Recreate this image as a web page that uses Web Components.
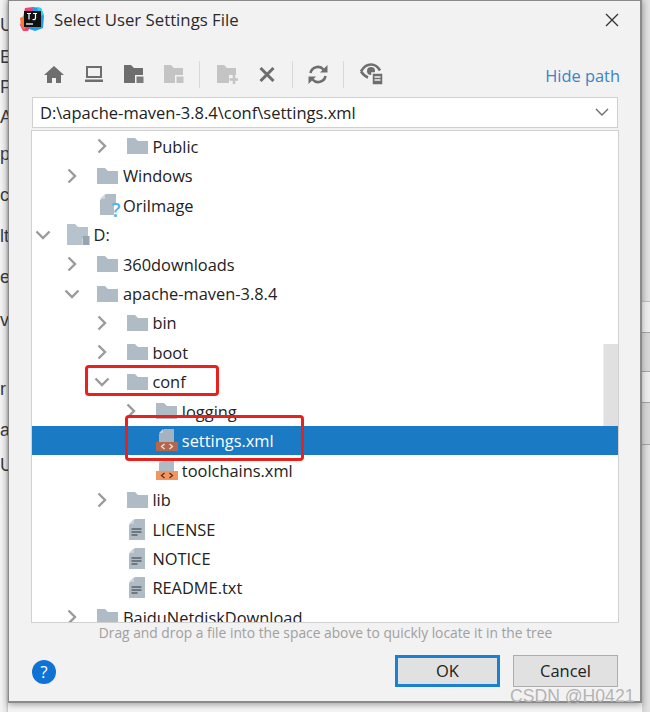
<!DOCTYPE html>
<html><head><meta charset="utf-8"><style>
html,body{margin:0;padding:0;background:#fafafa}
body{width:650px;height:712px;overflow:hidden;position:relative;font-family:"Open Sans","Noto Sans",sans-serif}
</style></head><body>
<desk-backdrop></desk-backdrop>
<file-dialog title="Select User Settings File">
  <tool-bar slot="toolbar"></tool-bar>
  <path-box slot="path" value="D:\apache-maven-3.8.4\conf\settings.xml"></path-box>
  <file-tree slot="tree">
    <tree-row level="2" chev="right" icon="folder">Public</tree-row>
    <tree-row level="1" chev="right" icon="folder">Windows</tree-row>
    <tree-row level="1" icon="unknown">OriImage</tree-row>
    <tree-row level="0" chev="down" icon="drive">D:</tree-row>
    <tree-row level="1" chev="right" icon="folder">360downloads</tree-row>
    <tree-row level="1" chev="down" icon="folder">apache-maven-3.8.4</tree-row>
    <tree-row level="2" chev="right" icon="folder">bin</tree-row>
    <tree-row level="2" chev="right" icon="folder">boot</tree-row>
    <tree-row level="2" chev="down" icon="folder">conf</tree-row>
    <tree-row level="3" chev="right" icon="folder">logging</tree-row>
    <tree-row level="3" icon="xml" selected>settings.xml</tree-row>
    <tree-row level="3" icon="xml">toolchains.xml</tree-row>
    <tree-row level="2" chev="right" icon="folder">lib</tree-row>
    <tree-row level="2" icon="text">LICENSE</tree-row>
    <tree-row level="2" icon="text">NOTICE</tree-row>
    <tree-row level="2" icon="text">README.txt</tree-row>
    <tree-row level="1" chev="right" icon="folder">BaiduNetdiskDownload</tree-row>
  </file-tree>
</file-dialog>
<red-mark style="left:85px;top:365px;width:134px;height:31px"></red-mark>
<red-mark style="left:125px;top:415px;width:179px;height:46px"></red-mark>
<water-mark>CSDN @H0421</water-mark>
<script>
const ICONS={
 folder:`<svg width="21" height="16" viewBox="0 0 21 16"><path d="M0 0h8l3 3h10v13H0z" fill="#afbcc6"/></svg>`,
 drive:`<svg width="23" height="21" viewBox="0 0 23 21"><path d="M0 0h8l3 3h10v11h-6v7H0z" fill="#b7c3cc"/><rect x="15.500" y="12" width="7" height="9" fill="#96a5b1"/></svg>`,
 text:`<svg width="16" height="21" viewBox="0 0 16 21"><path d="M6 0h10v21H0V6z" fill="#afbcc6"/><path d="M5 0v5H0z" fill="#c9d2d9"/><path d="M2.500 10h10M2.500 13h10M2.500 16h6" stroke="#59626a" stroke-width="1.300"/></svg>`,
 unknown:`<svg style="margin-left:6px;overflow:visible" width="21" height="23" viewBox="0 0 21 23"><path d="M6 0h10v9h-2v12H0V6z" fill="#afbcc6"/><path d="M5 0v5H0z" fill="#cdd5db"/><text x="11.500" y="23" font-family="Open Sans" font-weight="600" font-size="20" fill="#4db6ea">?</text></svg>`,
 xml:`<svg style="margin-left:1px" width="22" height="24" viewBox="0 0 22 24"><path d="M8 0h10v13H3V5z" fill="var(--page,#afbcc6)"/><path d="M7 0v4H3z" fill="var(--fold,#cdd5db)"/><rect y="13" width="22" height="9" fill="var(--bar,#f2955f)"/><path d="M8.500 15l-3 2.500 3 2.500M13.500 15l3 2.500-3 2.500" fill="none" stroke="var(--code,#5a3323)" stroke-width="1.300"/></svg>`,
 right:`<svg width="10" height="16" viewBox="0 0 10 16"><path d="M1.500 1.500L8 8l-6.500 6.500" fill="none" stroke="#9b9b9b" stroke-width="2.400"/></svg>`,
 down:`<svg width="16" height="10" viewBox="0 0 16 10"><path d="M1.500 1.500L8 8l6.500-6.500" fill="none" stroke="#9b9b9b" stroke-width="2.400"/></svg>`,
 home:`<svg width="20" height="17" viewBox="0 0 20 17"><path d="M10 0L0 9h3v8h5v-5h4v5h5V9h3z" fill="#6e6e6e"/></svg>`,
 pc:`<svg width="18" height="16" viewBox="0 0 18 16"><path d="M2 1h14v10H2z" fill="none" stroke="#6e6e6e" stroke-width="2"/><path d="M0 13.500h18V16H0z" fill="#6e6e6e"/></svg>`,
 fhome:`<svg width="20" height="18" viewBox="0 0 20 18"><path d="M0 0h7l3 3h9v7h-8v8H0z" fill="#6e6e6e"/><rect x="12.500" y="11.500" width="7" height="6.500" fill="#7c7c7c"/></svg>`,
 fhomeoff:`<svg width="20" height="18" viewBox="0 0 20 18"><path d="M0 0h7l3 3h9v7h-8v8H0z" fill="#c4c4c4"/><rect x="12.500" y="11.500" width="7" height="6.500" fill="#c4c4c4"/></svg>`,
 fnew:`<svg width="21" height="19" viewBox="0 0 21 19"><path d="M0 0h7l3 3h9v7h-7v8H0z" fill="#c4c4c4"/><path d="M17 10v9M12.500 14.500h8.500" stroke="#c4c4c4" stroke-width="2.500"/></svg>`,
 del:`<svg width="16" height="15" viewBox="0 0 16 15"><path d="M1.500 1L14.500 14M14.500 1L1.500 14" stroke="#6e6e6e" stroke-width="3"/></svg>`,
 refresh:`<svg width="20" height="19" viewBox="0 0 20 19"><path d="M2.500 8A7.500 7.500 0 0 1 15.500 4.500M17.500 11A7.500 7.500 0 0 1 4.500 14.500" fill="none" stroke="#6e6e6e" stroke-width="2.600"/><path d="M12 7.500h7.500V0zM8 11.500H.5V19z" fill="#6e6e6e"/></svg>`,
 eye:`<svg width="23" height="22" viewBox="0 0 23 22"><path d="M1 8.500C4 3 8 1.500 11 1.500s6.500 1.500 9 6M1 8.500c2 3 4 5 7 6" fill="none" stroke="#6e6e6e" stroke-width="2.600"/><circle cx="11" cy="8" r="4" fill="#6e6e6e"/><rect x="12" y="10" width="11" height="12" fill="#6e6e6e" stroke="#f2f2f2" stroke-width="1.500"/><path d="M14.500 14h6M14.500 17h6" stroke="#f2f2f2" stroke-width="1.300"/></svg>`,
 logo:`<svg width="24" height="25" viewBox="0 0 24 25"><path d="M5 1l8-1 3 8-8 16H3L0 18l3-7z" fill="#ef3f7f"/><path d="M0 11l6-3 2 9-4 6-3-4z" fill="#f9793a"/><path d="M13 0l8 1 3 8-1 12-8 3-6-2z" fill="#1f9fe6"/><path d="M17 0l4 1 3 7-5 1z" fill="#2fd0e8"/><rect x="4" y="4" width="17" height="16" fill="#111"/><path d="M6 17h7" stroke="#fff" stroke-width="1.300"/><path d="M7 6.500h4M9 6.500v6M13 6.500h4M15.500 6.500v4.500q0 2-3 1.500" stroke="#fff" stroke-width="1.200" fill="none"/></svg>`
};
function def(name,css,html){
  customElements.define(name,class extends HTMLElement{
    connectedCallback(){
      if(this.shadowRoot)return;
      const r=this.attachShadow({mode:"open"});
      r.innerHTML=`<style>${css}</style>`+(typeof html==="function"?html(this):html);
    }
  });
}
def("desk-backdrop",`
 :host{display:block;position:absolute;inset:0;overflow:hidden;font:18px "Liberation Sans",sans-serif;color:#3a3a3a;background:#f4f4f4}
 .left{display:flex;flex-direction:column;width:8px;height:100%;overflow:hidden;background:linear-gradient(90deg,#f4f4f4,#e6e6e6 70%,#c4c4c4)}
 .left span{display:block;height:20px;line-height:20px;white-space:nowrap}
 .right{position:absolute;left:642px;top:0;width:8px;height:100%;display:flex;flex-direction:column;background:linear-gradient(90deg,#d2d2d2,#e4e4e4)}
 .right i{display:block;flex:none;box-sizing:content-box;border-bottom:1px solid #a4a4a4}
 .right i.l{background:#ececec}.right i.d{background:#d6d6d6}
 .right .t{height:301px;flex:none;border-bottom:1px solid #bdbdbd}
`,()=>{
 const ys=[[25,"U"],[57,"E"],[87,"P"],[117,"A"],[154,"p"],[195,"c"],[236,"lt"],[277,"ea"],[320,"ve"],[389,"r"],[430,"a"],[465,"U"]];
 let p=0,l="";
 ys.forEach(([y,t])=>{l+=`<span style="margin-top:${y-10-p}px">${t}</span>`;p=y+10;});
 return `<div class="left">${l}</div><div class="right"><div class="t"></div><i class="l" style="height:30px"></i><i class="d" style="height:38px"></i><i class="l" style="height:30px"></i><i class="d" style="height:41px"></i></div>`;
});
def("file-dialog",`
 :host{display:flex;flex-direction:column;position:absolute;left:8px;top:0;width:634px;height:703px;box-sizing:border-box;background:#f2f2f2;border:1px solid #8a8a8a;border-width:1px 2px 2px 1px;box-shadow:0 2px 6px rgba(0,0,0,.32);color:#222}
 .title{display:flex;align-items:center;height:39px;padding:0 21px 2px 11px;box-sizing:border-box;flex:none}
 .title b{font-weight:400;font-size:16.800px;margin-left:10px;flex:1;color:#2b2b2b}
 .close{width:14px;height:14px}
 .toolbar{margin:14px 22px 0 25px;height:40px;flex:none;display:block}
 .path{margin:3px 22px 0 23px;flex:none;display:block}
 .tree{margin:2px 21px 0 22px;flex:none;display:block}
 .hint{height:20px;flex:none;text-align:center;font-size:13.800px;line-height:20px;color:#a0a0a0;padding-left:2px}
 .foot{display:flex;align-items:center;padding:12px 22px 0 23px}
 .help{width:24px;height:24px;border-radius:50%;background:#0f72d5;color:#fff;font-size:17px;line-height:24px;text-align:center;margin-right:auto;flex:none;position:relative;top:1px}
 .btn{box-sizing:border-box;width:105px;height:32px;display:flex;align-items:center;justify-content:center;font-size:16.500px;background:#e1e1e1;border:1px solid #adadad;color:#222;padding-bottom:2px}
 .btn.ok{border:3px solid #1a80d2;margin-right:13px}
`,h=>`
 <div class="title">${ICONS.logo}<b>${h.getAttribute("title")}</b><svg class="close" viewBox="0 0 14 14"><path d="M1 1l12 12M13 1L1 13" stroke="#333" stroke-width="1.300"/></svg></div>
 <div class="toolbar"><slot name="toolbar"></slot></div>
 <div class="path"><slot name="path"></slot></div>
 <div class="tree"><slot name="tree"></slot></div>
 <div class="hint">Drag and drop a file into the space above to quickly locate it in the tree</div>
 <div class="foot"><span class="help">?</span><span class="btn ok">OK</span><span class="btn">Cancel</span></div>`);
def("tool-bar",`
 :host{display:flex;align-items:center;height:40px}
 .b{width:40px;height:40px;display:flex;align-items:center;justify-content:center;flex:none}
 .s{width:1px;height:27px;background:#d9d9d9;flex:none}
 .s.a{margin:0 7px 0 5px}.s.c{margin:0 5px}
 a{margin-left:auto;margin-right:-2px;padding-top:2px;color:#3a84c6;font-size:16.400px;text-decoration:none}
`,()=>{
 const b=n=>`<span class="b">${ICONS[n]}</span>`;
 return b("home")+b("pc")+b("fhome")+b("fhomeoff")+`<i class="s a"></i>`+b("fnew")+b("del")+`<i class="s c"></i>`+b("refresh")+`<i class="s a"></i>`+b("eye")+`<a>Hide path</a>`;
});
def("path-box",`
 :host{display:flex;align-items:center;justify-content:space-between;box-sizing:border-box;height:31px;background:#fff;border:1px solid #d0d0d0;padding:0 8px 1px 7px;font-size:16.500px;color:#222}
`,h=>`<span>${h.getAttribute("value")}</span><svg width="14" height="9" viewBox="0 0 14 9"><path d="M1 1l6 6 6-6" fill="none" stroke="#6e6e6e" stroke-width="1.400"/></svg>`);
def("file-tree",`
 :host{display:block;position:relative;box-sizing:border-box;height:493px;background:#fff;border:1px solid #d0d0d0;overflow:hidden;padding-top:.6px}
 .thumb{position:absolute;left:571px;top:213px;width:15px;height:90px;background:#e0e0e0;border-left:1px solid #eee;box-sizing:border-box}
`,`<div class="thumb"></div><slot></slot>`);
def("tree-row",`
 :host{display:flex;align-items:center;position:relative;height:29.450px;box-sizing:border-box;font-size:16.400px;color:#222;white-space:nowrap}
 :host([selected]){background:#1a7bc4;color:#fff;--page:#a3b3c2;--fold:#c5d0da;--bar:#b4674c;--code:#f3e2da}
 .c{width:20px;display:flex;justify-content:center;flex:none}
 .i{width:25px;display:flex;justify-content:center;flex:none;margin-left:13px}
 .t{margin-left:2.500px}
`,h=>{
 const lv=+h.getAttribute("level"),c=h.getAttribute("chev");
 return `<span class="c" style="margin-left:${lv*29.45+1}px">${c?ICONS[c]:""}</span><span class="i">${ICONS[h.getAttribute("icon")]}</span><span class="t"><slot></slot></span>`;
});
def("red-mark",`:host{display:block;position:absolute;box-sizing:border-box;border:3px solid #e8211d;border-radius:4px}`,``);
def("water-mark",`:host{display:block;position:absolute;left:510px;top:686px;font:17.600px/20px "Liberation Sans",sans-serif;color:#b4b4b4;white-space:nowrap}`,`<slot></slot>`);
</script>
</body></html>
